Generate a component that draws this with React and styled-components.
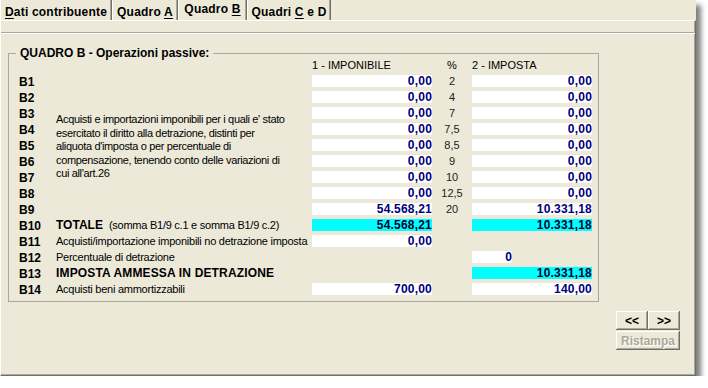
import styled, { createGlobalStyle } from "styled-components";

const GlobalStyle = createGlobalStyle`
  html, body {
    margin: 0;
    padding: 0;
    background: #fff;
  }
  body {
    font-family: "Liberation Sans", Arial, sans-serif;
    color: #000;
  }
`;

const FONT = `"Liberation Sans", Arial, sans-serif`;

const Window = styled.div`
  width: 696px;
  height: 376px;
  background: #ece9d8;
  box-shadow: 5px 5px 5px rgba(0, 0, 0, 0.5);
  display: flex;
  flex-direction: column;
`;

const TabStrip = styled.div`
  display: flex;
  height: 20px;
  flex: none;
`;

const Tab = styled.div`
  box-sizing: border-box;
  width: ${(p) => p.$w}px;
  height: 20px;
  padding-top: ${(p) => (p.$active ? 2 : 5)}px;
  text-align: center;
  font: bold 12px/14px ${FONT};
  letter-spacing: 0.2px;
  white-space: nowrap;
  border-left: 1px solid #fff;
  border-right: 1px solid #716f64;
  box-shadow: inset -1px 0 #aca899;

  u {
    text-underline-offset: 2px;
  }
`;

const Page = styled.div`
  flex: 1;
  display: flex;
  flex-direction: column;
  border-top: 1px solid #fff;
  border-left: 1px solid #fff;
  border-right: 1px solid #716f64;
  border-bottom: 1px solid #716f64;
  box-shadow: inset -1px -1px #aca899;
  padding-top: 11px;
`;

const Inner = styled.div`
  flex: 1;
  display: flex;
  flex-direction: column;
  align-items: flex-start;
  border-top: 1px solid #aca899;
  box-shadow: inset 0 1px #fff;
  padding: 14px 0 0 7px;
`;

const Group = styled.fieldset`
  margin: 0;
  min-width: 0;
  width: 591px;
  box-sizing: border-box;
  border: 1px solid #aca899;
  padding: 0 6px 6px 7px;
`;

const Legend = styled.legend`
  padding: 0 4px;
  font: bold 12px/12px ${FONT};
`;

const Grid = styled.div`
  display: grid;
  margin-left: 3px;
  grid-template-columns: 37px 256px 120px 40px 120px;
  grid-auto-rows: 12px;
  row-gap: 4px;
`;

const ColHead = styled.div`
  grid-row: 1;
  grid-column: ${(p) => p.$col};
  font: 11px/12px ${FONT};
  white-space: nowrap;
  text-align: ${(p) => (p.$center ? "center" : "left")};
`;

const Code = styled.div`
  grid-row: ${(p) => p.$row};
  grid-column: 1;
  font: bold 12px/12px ${FONT};
  padding-top: 1px;
`;

const Desc = styled.div`
  grid-row: ${(p) => p.$row};
  grid-column: 2;
  font: 11px/12px ${FONT};
  letter-spacing: -0.25px;
  white-space: nowrap;
`;

const Strong = styled.span`
  font: bold 12px/12px ${FONT};
  letter-spacing: ${(p) => (p.$wide ? "0.15px" : "0")};
  margin-right: 6px;
`;

const Note = styled.div`
  grid-row: 4 / 9;
  grid-column: 2;
  padding-top: 6px;
  font: 11px/13.6px ${FONT};
  letter-spacing: -0.35px;
`;

const Field = styled.div`
  grid-row: ${(p) => p.$row};
  grid-column: ${(p) => p.$col};
  width: ${(p) => (p.$narrow ? "40px" : "auto")};
  background: ${(p) => (p.$hi ? "#00ffff" : "#fff")};
  color: ${(p) => (p.$hi ? "#000033" : "#000080")};
  font: bold 12px/12px ${FONT};
  letter-spacing: 0.2px;
  text-align: right;
  overflow: hidden;
  white-space: nowrap;
`;

const Pct = styled.div`
  grid-row: ${(p) => p.$row};
  grid-column: 4;
  font: 11px/12px ${FONT};
  color: #222;
  text-align: center;
`;

const Buttons = styled.div`
  align-self: flex-end;
  margin: 9px 15px 0 0;
  display: grid;
  grid-template-columns: 32px 32px;
  grid-auto-rows: 19px;
  row-gap: 1px;
`;

const Button = styled.button`
  grid-column: ${(p) => (p.$wide ? "1 / 3" : "auto")};
  margin: 0;
  padding: 0;
  border: none;
  background: #ece9d8;
  box-shadow: inset -1px -1px #716f64, inset 1px 1px #fff,
    inset -2px -2px #aca899;
  font: bold 12px/12px ${FONT};
  color: ${(p) => (p.disabled ? "#aca899" : "#000")};
  text-shadow: ${(p) => (p.disabled ? "1px 1px #fff" : "none")};
`;

const tabs = [
  { pre: "", key: "D", post: "ati contribuente", w: 112 },
  { pre: "Quadro ", key: "A", post: "", w: 66 },
  { pre: "Quadro ", key: "B", post: "", w: 69, active: true },
  { pre: "Quadri ", key: "C", post: " e D", w: 84 },
];

const rows = [
  { code: "B1", imp: "0,00", pct: "2", iva: "0,00" },
  { code: "B2", imp: "0,00", pct: "4", iva: "0,00" },
  { code: "B3", imp: "0,00", pct: "7", iva: "0,00" },
  { code: "B4", imp: "0,00", pct: "7,5", iva: "0,00" },
  { code: "B5", imp: "0,00", pct: "8,5", iva: "0,00" },
  { code: "B6", imp: "0,00", pct: "9", iva: "0,00" },
  { code: "B7", imp: "0,00", pct: "10", iva: "0,00" },
  { code: "B8", imp: "0,00", pct: "12,5", iva: "0,00" },
  { code: "B9", imp: "54.568,21", pct: "20", iva: "10.331,18" },
  {
    code: "B10",
    strong: "TOTALE",
    text: "(somma B1/9 c.1 e somma B1/9 c.2)",
    imp: "54.568,21",
    iva: "10.331,18",
    hi: true,
  },
  {
    code: "B11",
    text: "Acquisti/importazione imponibili no detrazione imposta",
    imp: "0,00",
  },
  { code: "B12", text: "Percentuale di detrazione", small: "0" },
  {
    code: "B13",
    strong: "IMPOSTA AMMESSA IN DETRAZIONE",
    wide: true,
    iva: "10.331,18",
    hiIva: true,
  },
  {
    code: "B14",
    text: "Acquisti beni ammortizzabili",
    imp: "700,00",
    iva: "140,00",
  },
];

export default function App() {
  return (
    <>
      <GlobalStyle />
      <Window>
        <TabStrip>
          {tabs.map((t) => (
            <Tab key={t.key} $w={t.w} $active={t.active}>
              {t.pre}
              <u>{t.key}</u>
              {t.post}
            </Tab>
          ))}
        </TabStrip>
        <Page>
          <Inner>
            <Group>
              <Legend>QUADRO B - Operazioni passive:</Legend>
              <Grid>
                <ColHead $col={3}>1 - IMPONIBILE</ColHead>
                <ColHead $col={4} $center>
                  %
                </ColHead>
                <ColHead $col={5}>2 - IMPOSTA</ColHead>

                <Note>
                  Acquisti e importazioni imponibili per i quali e' stato
                  <br />
                  esercitato il diritto alla detrazione, distinti per
                  <br />
                  aliquota d'imposta o per percentuale di
                  <br />
                  compensazione, tenendo conto delle variazioni di
                  <br />
                  cui all'art.26
                </Note>

                {rows.map((r, i) => {
                  const row = i + 2;
                  return [
                    <Code key={r.code} $row={row}>
                      {r.code}
                    </Code>,
                    (r.text || r.strong) && (
                      <Desc key={r.code + "d"} $row={row}>
                        {r.strong && <Strong $wide={r.wide}>{r.strong}</Strong>}
                        {r.text}
                      </Desc>
                    ),
                    r.imp && (
                      <Field key={r.code + "i"} $row={row} $col={3} $hi={r.hi}>
                        {r.imp}
                      </Field>
                    ),
                    r.pct && (
                      <Pct key={r.code + "p"} $row={row}>
                        {r.pct}
                      </Pct>
                    ),
                    r.iva && (
                      <Field
                        key={r.code + "v"}
                        $row={row}
                        $col={5}
                        $hi={r.hi || r.hiIva}
                      >
                        {r.iva}
                      </Field>
                    ),
                    r.small && (
                      <Field key={r.code + "s"} $row={row} $col={5} $narrow>
                        {r.small}
                      </Field>
                    ),
                  ];
                })}
              </Grid>
            </Group>
            <Buttons>
              <Button>&lt;&lt;</Button>
              <Button>&gt;&gt;</Button>
              <Button $wide disabled>
                Ristampa
              </Button>
            </Buttons>
          </Inner>
        </Page>
      </Window>
    </>
  );
}
